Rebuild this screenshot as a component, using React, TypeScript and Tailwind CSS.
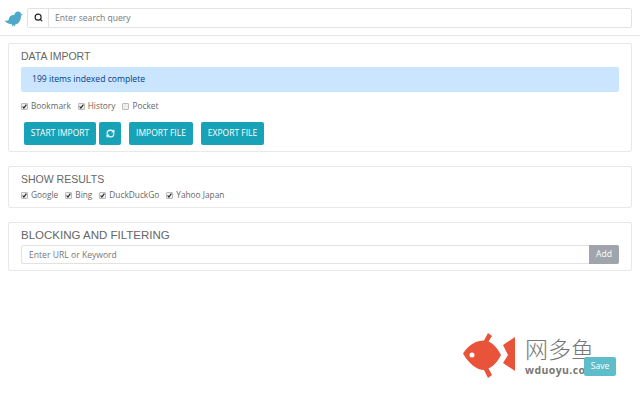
import { Search, RefreshCw } from 'lucide-react';

const font = { fontFamily: '"Open Sans", sans-serif' };

function Check({ label, checked = true }: { label: string; checked?: boolean }) {
  return (
    <label className="flex items-center gap-[3px] text-[8.3px] text-[#666]">
      <span className="flex h-[7px] w-[7px] items-center justify-center rounded-[1px] border border-[#bbb] bg-[#eee]">
        {checked && (
          <svg viewBox="0 0 8 8" className="h-[7px] w-[7px]">
            <path d="M1 4l2 2.500L7 1" fill="none" stroke="#222" strokeWidth="1.8" />
          </svg>
        )}
      </span>
      {label}
    </label>
  );
}

function TealButton({ children, className }: { children: React.ReactNode; className: string }) {
  return (
    <button className={`flex h-[23px] items-center justify-center rounded-[2px] bg-[#17a2b8] text-[8.5px] font-medium text-white ${className}`}>
      {children}
    </button>
  );
}

function Card({ title, className, titleClass, children }: { title: string; className: string; titleClass: string; children: React.ReactNode }) {
  return (
    <section className={`mx-[8px] rounded-[2px] border border-[#e8e8e8] bg-white px-[12px] ${className}`}>
      <h2 className={`leading-[14px] text-[#666] ${titleClass}`} style={{ fontFamily: '"Liberation Sans", sans-serif' }}>{title}</h2>
      {children}
    </section>
  );
}

export default function App() {
  return (
    <div className="relative h-[400px] w-[640px] overflow-hidden bg-white" style={font}>
      {/* nav */}
      <div className="flex h-[36px] items-center border-b border-[#e6e6e6] pl-[4px] pr-[8px]">
        <svg viewBox="0 0 20 20" className="h-[20px] w-[20px]">
          <path
            d="M0.500 12.500c2 .3 3 .2 4-.3 .5-3.500 3-5.500 5.500-5 .8-3 2.800-4.200 4.800-3.700 1.500 .4 2.200 1.500 2.300 2.700l1.900 .3-1.900 1.300c-.3 5.200-2.600 8.200-6.100 8.900l-.2 2.300-1.300-2.100-1.200 1.500-.3-2.100C6 16 2.500 15.500 .5 12.500z"
            fill="#4fa9c9"
          />
        </svg>
        <div className="ml-[3px] flex h-[20px] flex-1 items-center rounded-[2px] border border-[#e2e2e2]">
          <span className="flex h-full w-[21px] items-center justify-center border-r border-[#e2e2e2]">
            <Search size={9} strokeWidth={3} color="#222" />
          </span>
          <span className="pl-[6px] pt-[1px] text-[8.6px] text-[#777]">Enter search query</span>
        </div>
      </div>

      {/* data import */}
      <Card title="DATA IMPORT" titleClass="text-[10.5px]" className="mt-[7px] h-[109px] pt-[5px]">
        <div className="mt-[4px] flex h-[25px] items-center rounded-[2px] bg-[#cce5ff] pl-[11px] text-[8.6px] text-[#004085]">
          199 items indexed complete
        </div>
        <div className="mt-[8px] flex h-[12px] gap-[7px]">
          <Check label="Bookmark" />
          <Check label="History" />
          <Check label="Pocket" checked={false} />
        </div>
        <div className="mt-[10px] ml-[3px] flex">
          <TealButton className="w-[72px]">START IMPORT</TealButton>
          <TealButton className="ml-[3px] w-[22px]">
            <RefreshCw size={9} strokeWidth={3} />
          </TealButton>
          <TealButton className="ml-[8px] w-[64px]">IMPORT FILE</TealButton>
          <TealButton className="ml-[8px] w-[63px]">EXPORT FILE</TealButton>
        </div>
      </Card>

      {/* show results */}
      <Card title="SHOW RESULTS" titleClass="text-[10.5px]" className="mt-[14px] h-[42px] pt-[5px]">
        <div className="mt-[3px] flex h-[12px] gap-[7px]">
          <Check label="Google" />
          <Check label="Bing" />
          <Check label="DuckDuckGo" />
          <Check label="Yahoo Japan" />
        </div>
      </Card>

      {/* blocking */}
      <Card title="BLOCKING AND FILTERING" titleClass="text-[11.5px]" className="mt-[14px] h-[49px] pt-[5px]">
        <div className="mt-[3px] flex h-[19px] rounded-[2px] border border-[#e2e2e2]">
          <span className="flex flex-1 items-center pl-[7px] pt-[1px] text-[8.6px] text-[#777]">Enter URL or Keyword</span>
          <button className="-my-px -mr-px w-[30px] rounded-r-[2px] bg-[#a0a5ab] text-[8.6px] font-medium text-white">Add</button>
        </div>
      </Card>

      {/* watermark */}
      <div className="pointer-events-none absolute left-[462px] top-[332px] flex">
        <svg viewBox="0 0 56 48" className="h-[48px] w-[56px]">
          <path d="M1 21.500 C7 12 15 8.500 22 8.500 L26 1 L30 4 L26.500 9.500 C32 12 36 17 39 23 C36 29 32 34 26.500 36.500 L30 43 L26 46 L22 38 C15 38 7 32 1 21.500z" fill="#e8533a" />
          <circle cx="10" cy="23" r="2.500" fill="#fff" />
          <path d="M53 5 L41 13 L46 23 L41 31 L53 39z" fill="#e8533a" />
        </svg>
        <div className="ml-[7px] flex flex-col pt-[3px]">
          <span className="text-[23px] leading-[27px] text-[#777]" style={{ fontFamily: '"Noto Sans CJK SC", sans-serif', fontWeight: 300 }}>网多鱼</span>
          <span className="mt-[1px] text-[10.5px] font-bold leading-[14px] tracking-[0.4px] text-[#777]">wduoyu.com</span>
        </div>
      </div>

      <div className="relative mt-[86px] flex justify-end pr-[24px]">
        <button className="h-[19px] w-[32px] rounded-[2px] bg-[#5fbccb] text-[8.6px] font-medium text-white">Save</button>
      </div>
    </div>
  );
}
